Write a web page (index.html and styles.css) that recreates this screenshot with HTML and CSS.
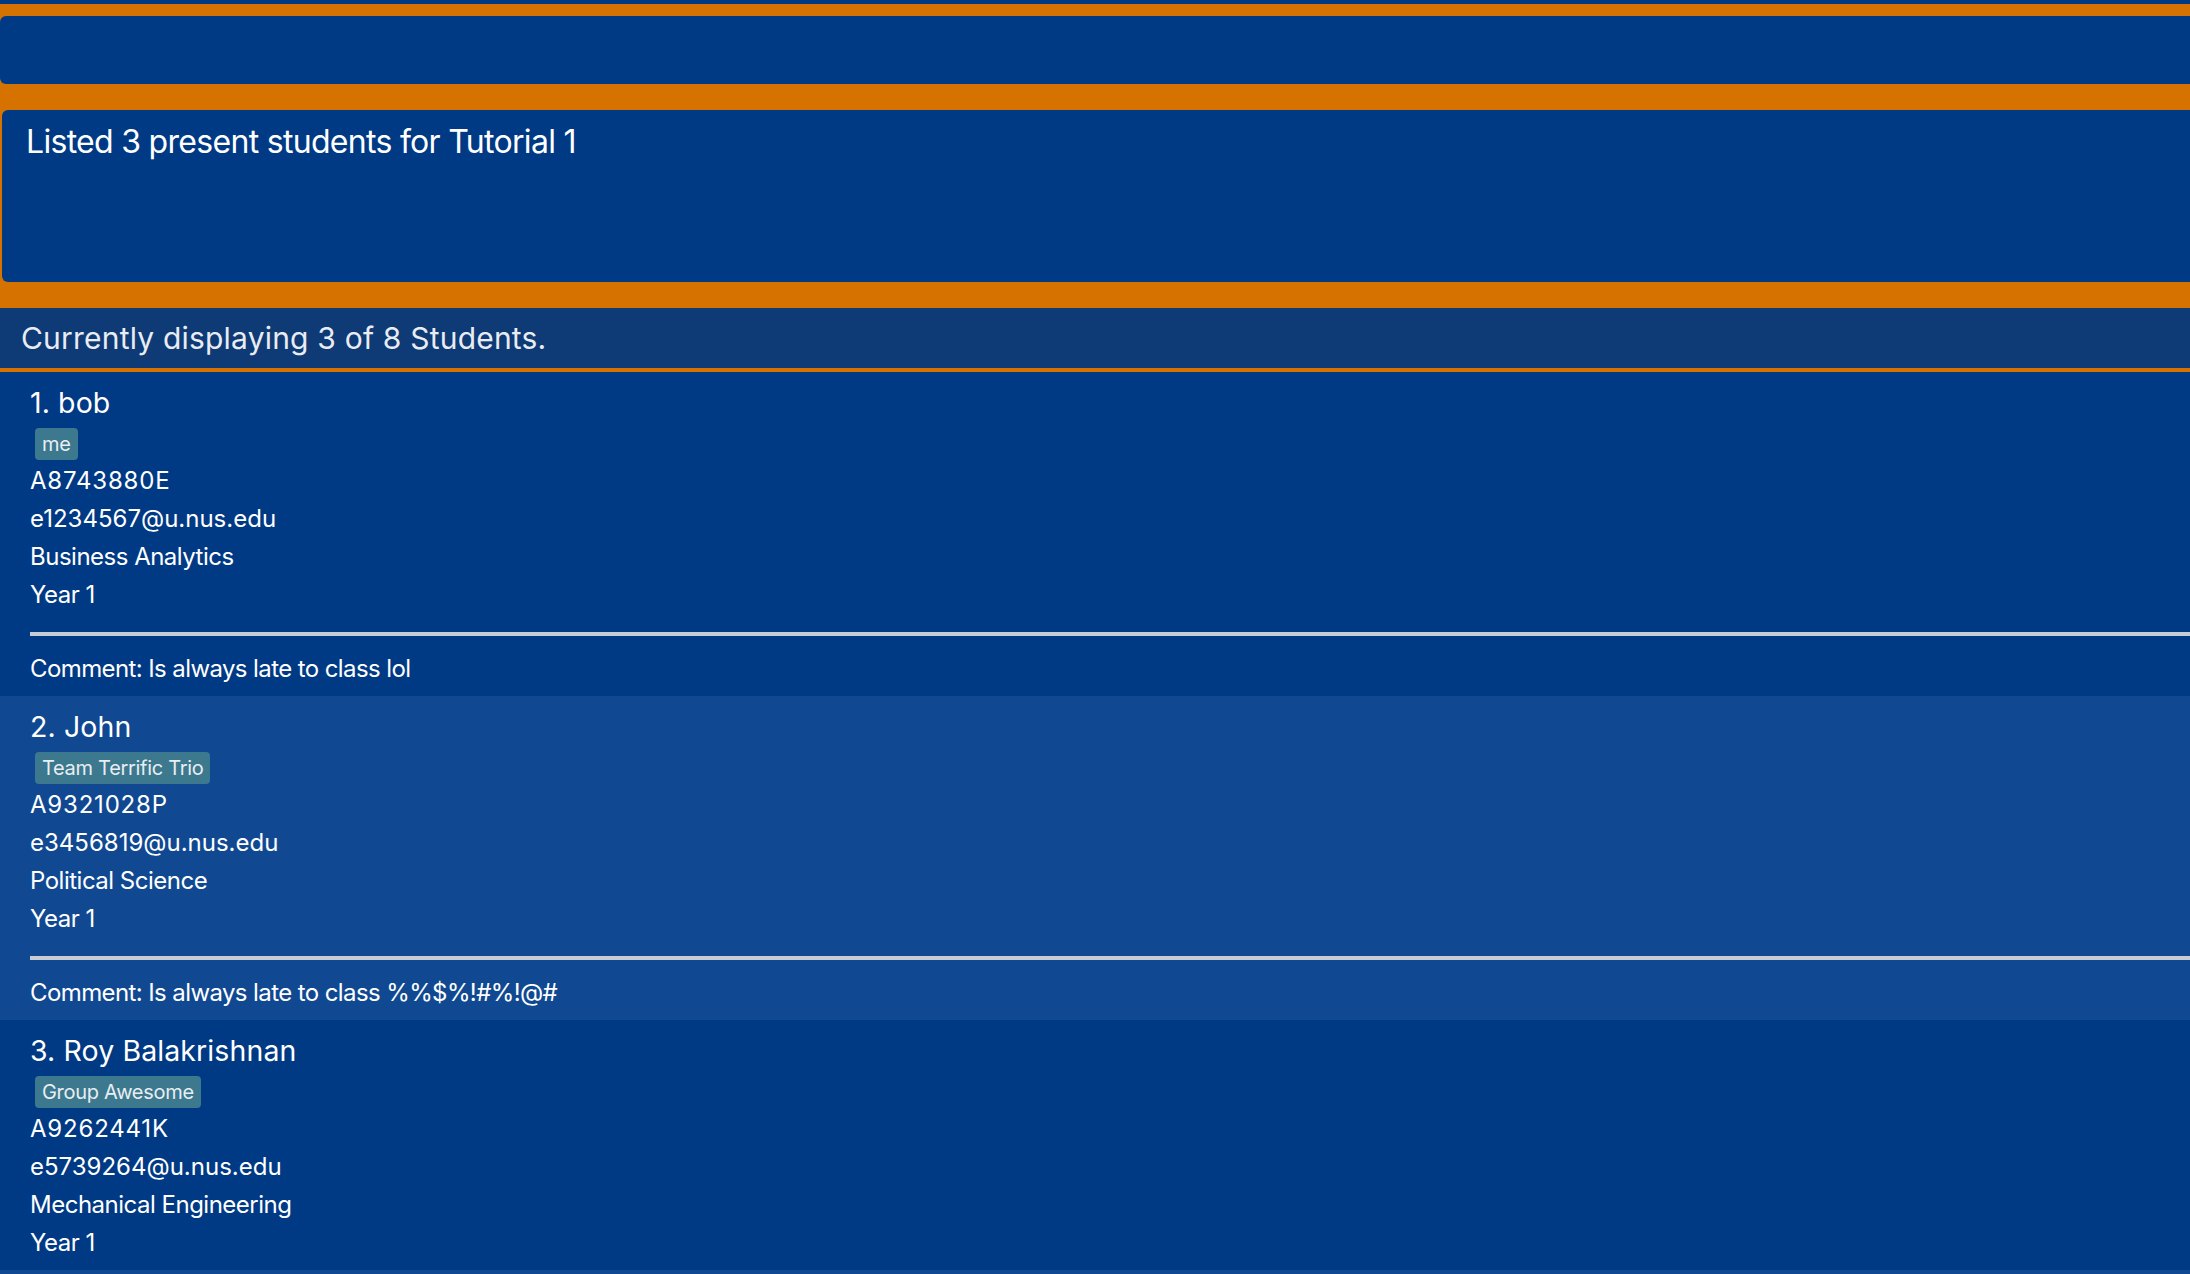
FILE: index.html
```html
<!DOCTYPE html>
<html>
<head>
<meta charset="utf-8">
<link rel="stylesheet" href="styles.css">
</head>
<body>
<div class="app">
  <div class="menubar"></div>
  <div class="command-box"></div>
  <div class="result-box">Listed 3 present students for Tutorial 1</div>
  <div class="list-header">Currently displaying 3 of 8 Students.</div>
  <div class="list">
    <div class="card">
      <div class="name">1. bob</div>
      <div class="tags"><span class="tag">me</span></div>
      <div class="field id">A8743880E</div>
      <div class="field email">e1234567@u.nus.edu</div>
      <div class="field">Business Analytics</div>
      <div class="field">Year 1</div>
      <div class="separator"></div>
      <div class="comment">Comment: Is always late to class lol</div>
    </div>
    <div class="card alt">
      <div class="name">2. John</div>
      <div class="tags"><span class="tag">Team Terrific Trio</span></div>
      <div class="field id">A9321028P</div>
      <div class="field email">e3456819@u.nus.edu</div>
      <div class="field">Political Science</div>
      <div class="field">Year 1</div>
      <div class="separator"></div>
      <div class="comment">Comment: Is always late to class %%$%!#%!@#</div>
    </div>
    <div class="card">
      <div class="name">3. Roy Balakrishnan</div>
      <div class="tags"><span class="tag">Group Awesome</span></div>
      <div class="field id">A9262441K</div>
      <div class="field email">e5739264@u.nus.edu</div>
      <div class="field">Mechanical Engineering</div>
      <div class="field">Year 1</div>
    </div>
  </div>
</div>
</body>
</html>
```

FILE: styles.css
```css
html, body {
  margin: 0;
  padding: 0;
  height: 100%;
  overflow: hidden;
}
body {
  background: #d67300;
  font-family: Inter, "Noto Sans", "Liberation Sans", sans-serif;
  color: #ffffff;
}
.app {
  display: flex;
  flex-direction: column;
}
.menubar {
  height: 4px;
  background: #003984;
}
.command-box {
  height: 68px;
  margin-top: 12px;
  background: #003984;
  border-radius: 6px 0 0 6px;
}
.result-box {
  height: 172px;
  box-sizing: border-box;
  margin-top: 26px;
  margin-left: 2px;
  padding: 12px 0 0 24px;
  background: #003984;
  border-radius: 6px 0 0 6px;
  font-size: 32px;
  line-height: 40px;
  letter-spacing: -0.7px;
}
.list-header {
  margin-top: 26px;
  height: 60px;
  padding-left: 21px;
  background: #0e3a75;
  border-bottom: 4px solid #d67300;
  font-size: 30px;
  line-height: 60px;
  letter-spacing: 0.2px;
  color: #e9ecf2;
}
.list {
  background: #104992;
  height: 1000px;
}
.card {
  box-sizing: border-box;
  padding: 11px 0 8px 30px;
  background: #003984;
  display: flex;
  flex-direction: column;
}
.card.alt {
  background: #104992;
}
.name {
  font-size: 28.5px;
  line-height: 40px;
  letter-spacing: 0.1px;
}
.tags {
  display: flex;
  gap: 6px;
  margin: 5px 0 2px 5px;
}
.tag {
  display: inline-block;
  height: 32px;
  padding: 0 7px;
  border-radius: 4px;
  background: #3c788e;
  color: #e8eef2;
  font-size: 20px;
  line-height: 32px;
  letter-spacing: -0.3px;
}
.field {
  font-size: 24px;
  line-height: 38px;
  letter-spacing: -0.5px;
}
.field.id {
  letter-spacing: 0.8px;
}
.field.email {
  letter-spacing: 0;
}
.separator {
  height: 4px;
  margin-top: 18px;
  background: #c8ccd4;
}
.comment {
  margin-top: 14px;
  font-size: 24px;
  line-height: 38px;
  letter-spacing: -0.6px;
}
```
